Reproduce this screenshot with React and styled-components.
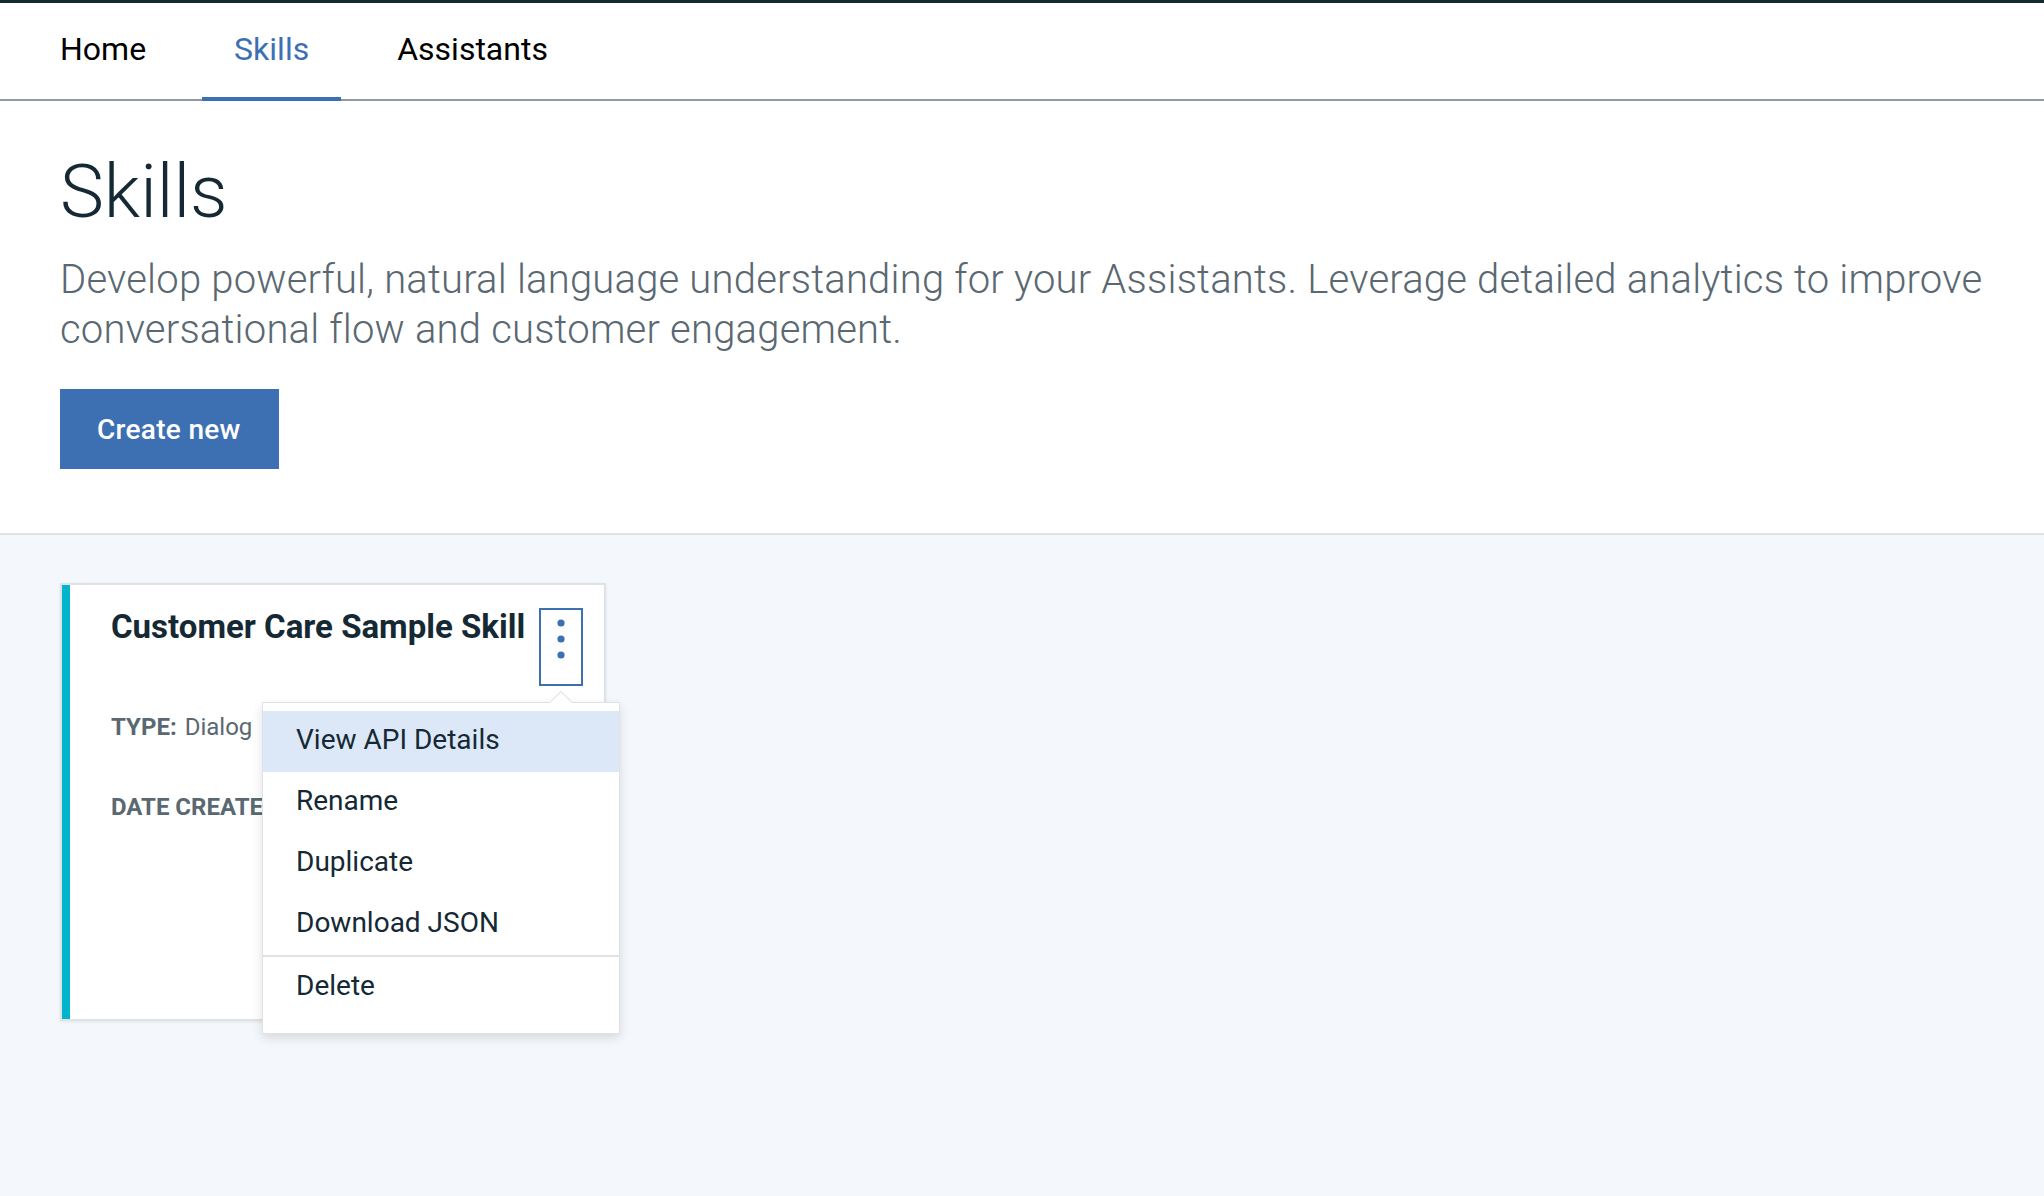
import React from 'react';
import styled, { createGlobalStyle } from 'styled-components';

const GlobalStyle = createGlobalStyle`
  html, body {
    margin: 0;
    padding: 0;
    background: #ffffff;
    font-family: Roboto, "Liberation Sans", sans-serif;
  }
  * { box-sizing: border-box; }
`;

const Page = styled.div`
  min-height: 100vh;
  display: flex;
  flex-direction: column;
`;

const Nav = styled.nav`
  display: flex;
  align-items: stretch;
  height: 101px;
  padding-left: 28px;
  border-top: 3px solid #152935;
  border-bottom: 2px solid #8c9ba5;
`;

const Tab = styled.a`
  display: flex;
  align-items: center;
  padding: 0 32px 3px;
  margin-right: 24px;
  margin-bottom: -2px;
  font-size: 32px;
  font-weight: 400;
  color: ${p => (p.$active ? '#3d70b2' : '#000000')};
  border-bottom: 4px solid ${p => (p.$active ? '#3d70b2' : 'transparent')};
  text-decoration: none;
  cursor: pointer;
`;

const Header = styled.header`
  padding: 54px 60px 64px;
`;

const Title = styled.h1`
  margin: 0;
  font-size: 74px;
  line-height: 74px;
  font-weight: 300;
  color: #152935;
`;

const Lead = styled.p`
  margin: 26px 0 34px;
  font-size: 40px;
  line-height: 50px;
  font-weight: 300;
  letter-spacing: 0.2px;
  color: #5a6872;
`;

const PrimaryButton = styled.button`
  height: 80px;
  padding: 0 38px 0 37px;
  border: none;
  background: #3d70b2;
  color: #ffffff;
  font-family: inherit;
  font-size: 28px;
  font-weight: 500;
  letter-spacing: 0.3px;
  cursor: pointer;
`;

const Content = styled.section`
  flex: 1;
  padding: 48px 60px;
  background: #f4f7fb;
  border-top: 2px solid #dfe3e6;
`;

const Card = styled.div`
  position: relative;
  display: flex;
  width: 546px;
  height: 438px;
  background: #ffffff;
  border: 2px solid #dfe3e6;
  box-shadow: 0 1px 3px rgba(0, 0, 0, 0.08);
`;

const Accent = styled.div`
  width: 8px;
  flex-shrink: 0;
  background: #00b4cc;
`;

const CardBody = styled.div`
  flex: 1;
  display: flex;
  flex-direction: column;
  padding: 22px 21px 0 41px;
`;

const CardHead = styled.div`
  display: flex;
  align-items: flex-start;
  justify-content: space-between;
`;

const CardTitle = styled.h3`
  margin: 0;
  font-size: 33px;
  line-height: 40px;
  font-weight: 700;
  color: #152935;
`;

const OverflowButton = styled.button`
  display: flex;
  justify-content: center;
  align-items: flex-start;
  width: 44px;
  height: 78px;
  margin-top: 1px;
  padding: 9px 0 0;
  background: transparent;
  border: 2px solid #3d70b2;
  cursor: pointer;
`;

const Meta = styled.div`
  width: 151px;
  margin-top: ${p => p.$gap}px;
  font-size: 24px;
  line-height: 32px;
  color: #5a6872;
  white-space: nowrap;
  overflow: hidden;
`;

const MetaLabel = styled.span`
  font-weight: 700;
  margin-right: 8px;
`;

const Menu = styled.ul`
  position: absolute;
  left: 200px;
  top: 117px;
  width: 358px;
  margin: 0;
  padding: 8px 0 15px;
  list-style: none;
  background: #ffffff;
  border: 1px solid #dfe3e6;
  box-shadow: 0 4px 10px rgba(0, 0, 0, 0.12);
  z-index: 2;
`;

const Caret = styled.span`
  position: absolute;
  left: 290px;
  top: -9px;
  width: 16px;
  height: 16px;
  background: #ffffff;
  border-top: 1px solid #dfe3e6;
  border-left: 1px solid #dfe3e6;
  transform: rotate(45deg);
`;

const MenuItem = styled.li`
  position: relative;
  box-sizing: content-box;
  height: 57px;
  padding: 0 33px 4px;
  font-size: 28px;
  line-height: 57px;
  color: #152935;
  background: ${p => (p.$active ? '#dce8f8' : 'transparent')};
  border-top: ${p => (p.$divided ? '2px solid #dfe3e6' : 'none')};
  cursor: pointer;
`;

const Dots = () => (
  <svg width="8" height="40" viewBox="0 0 8 40" fill="#3d70b2">
    <circle cx="4" cy="4" r="3.6" />
    <circle cx="4" cy="20" r="3.6" />
    <circle cx="4" cy="36" r="3.6" />
  </svg>
);

const menuItems = ['View API Details', 'Rename', 'Duplicate', 'Download JSON'];

export default function App() {
  return (
    <Page>
      <GlobalStyle />
      <Nav>
        <Tab>Home</Tab>
        <Tab $active>Skills</Tab>
        <Tab>Assistants</Tab>
      </Nav>
      <Header>
        <Title>Skills</Title>
        <Lead>
          Develop powerful, natural language understanding for your Assistants. Leverage detailed analytics to improve
          conversational flow and customer engagement.
        </Lead>
        <PrimaryButton>Create new</PrimaryButton>
      </Header>
      <Content>
        <Card>
          <Accent />
          <CardBody>
            <CardHead>
              <CardTitle>Customer Care Sample Skill</CardTitle>
              <OverflowButton aria-label="More options">
                <Dots />
              </OverflowButton>
            </CardHead>
            <Meta $gap={25}>
              <MetaLabel>TYPE:</MetaLabel>Dialog
            </Meta>
            <Meta $gap={48}>
              <MetaLabel>DATE CREATED:</MetaLabel>08/22/2018
            </Meta>
          </CardBody>
          <Menu>
            <Caret />
            {menuItems.map((item, i) => (
              <MenuItem key={item} $active={i === 0}>{item}</MenuItem>
            ))}
            <MenuItem $divided>Delete</MenuItem>
          </Menu>
        </Card>
      </Content>
    </Page>
  );
}
